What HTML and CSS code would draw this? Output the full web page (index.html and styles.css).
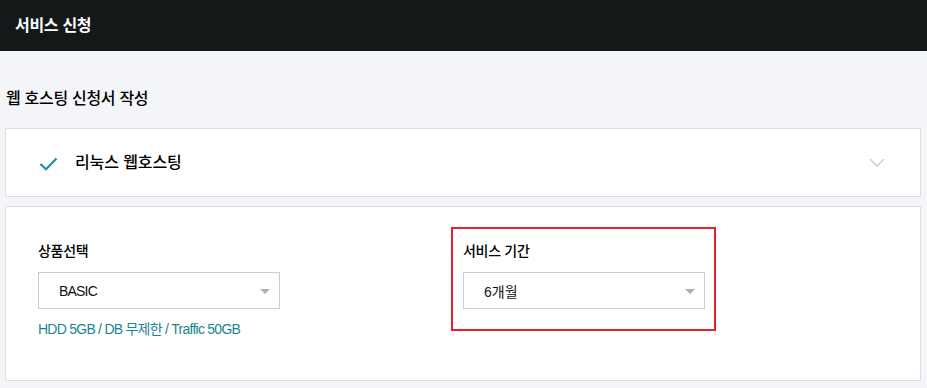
FILE: index.html
```html
<!DOCTYPE html>
<html lang="ko">
<head>
<meta charset="utf-8">
<title>서비스 신청</title>
<link rel="stylesheet" href="styles.css">
</head>
<body>
<header class="topbar">
  <h1 class="topbar-title">서비스 신청</h1>
</header>
<main class="content">
  <h2 class="section-title">웹 호스팅 신청서 작성</h2>
  <div class="card card-product">
    <svg class="check" width="19" height="14" viewBox="0 0 19 14"><path d="M1.5 7 L7 12.3 L17.5 1.5" fill="none" stroke="#1a8f98" stroke-width="2.2"/></svg>
    <span class="product-name">리눅스 웹호스팅</span>
    <svg class="chevron" width="16" height="9" viewBox="0 0 16 9"><path d="M1 1 L8 8 L15 1" fill="none" stroke="#c3c8d1" stroke-width="1.3"/></svg>
  </div>
  <div class="card card-form">
    <div class="field">
      <div class="field-label">상품선택</div>
      <div class="select"><span class="latin">BASIC</span><i class="caret"></i></div>
      <div class="spec">HDD 5GB / DB 무제한 / Traffic 50GB</div>
    </div>
    <div class="field field-highlight">
      <div class="field-label">서비스 기간</div>
      <div class="select"><span>6개월</span><i class="caret"></i></div>
    </div>
  </div>
</main>
</body>
</html>
```
FILE: styles.css
```css
* { box-sizing: border-box; }
body {
  margin: 0;
  background: #f4f5f9;
  font-family: "Liberation Sans", "Noto Sans CJK KR", sans-serif;
  color: #111;
}
.topbar {
  height: 51px;
  background: #121918;
  display: flex;
  align-items: center;
  padding: 0 15px 4px;
}
.topbar-title {
  margin: 0;
  color: #fff;
  font-size: 16px;
  font-weight: bold;
  letter-spacing: -0.3px;
}
.content {
  padding: 0 6px 0 5px;
}
.section-title {
  margin: 0;
  padding: 37px 0 0 1px;
  height: 77px;
  font-size: 16px;
  font-weight: 500;
  line-height: 22px;
  letter-spacing: -0.3px;
  color: #000;
}
.card {
  background: #fff;
  border: 1px solid #dcdfe4;
}
.card-product {
  height: 69px;
  display: flex;
  align-items: center;
  padding: 0 35px 0 33px;
}
.check { margin-top: 2px; }
.product-name {
  margin-left: 17px;
  font-size: 16px;
  font-weight: 500;
  letter-spacing: -0.1px;
  flex: 1;
  margin-top: -3px;
  color: #000;
}
.card-form {
  margin-top: 9px;
  height: 175px;
  padding: 20px 32px 0;
  display: grid;
  grid-template-columns: 413px 265px;
  align-items: start;
}
.field {
  padding: 13px 0 0;
}
.field-highlight {
  border: 2px solid #e6202a;
  padding: 11px 9px 20px 10px;
}
.field-label {
  font-size: 14px;
  line-height: 22px;
  font-weight: 500;
  letter-spacing: -0.3px;
  margin-bottom: 10px;
  color: #000;
}
.select {
  width: 242px;
  height: 37px;
  border: 1px solid #c9cdd5;
  display: flex;
  align-items: center;
  justify-content: space-between;
  padding: 0 9px 0 20px;
  font-size: 14px;
  color: #111;
}
.latin { letter-spacing: -0.8px; }
.caret {
  width: 0;
  height: 0;
  border-left: 5px solid transparent;
  border-right: 5px solid transparent;
  border-top: 5px solid #a9aec0;
  margin-top: 2px;
}
.spec {
  margin-top: 9px;
  font-size: 14px;
  color: #1a8590;
  letter-spacing: -0.75px;
}
```
